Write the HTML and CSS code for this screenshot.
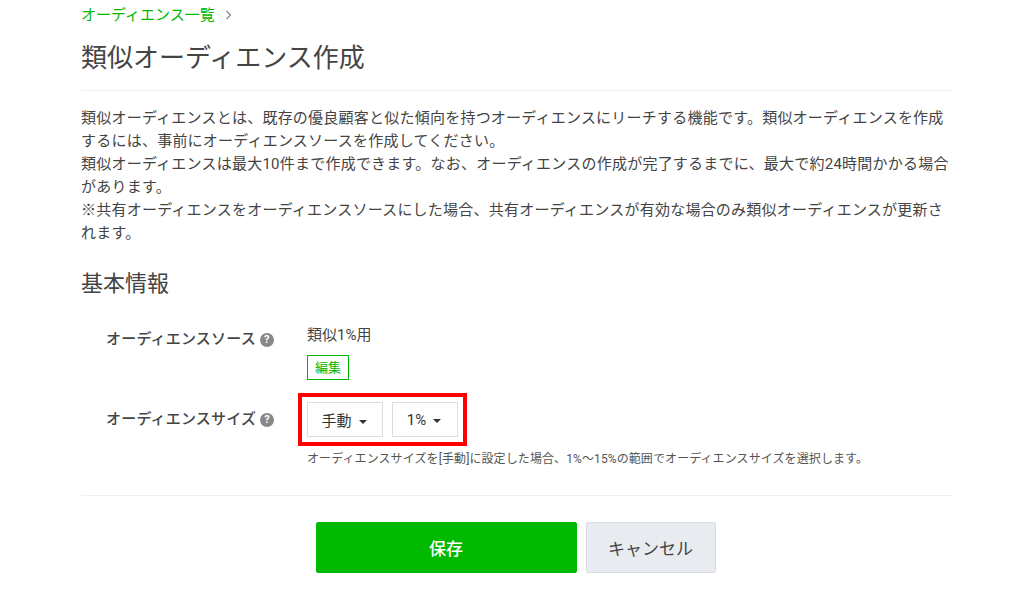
FILE: index.html
```html
<!DOCTYPE html>
<html lang="ja">
<head>
    <meta charset="UTF-8">
    <title>類似オーディエンス作成</title>
    <link rel="stylesheet" href="styles.css">
</head>
<body>
    <div class="container">
        <div class="breadcrumb">
            <a href="#">オーディエンス一覧</a>
            <svg class="crumb-arrow" width="8" height="10" viewBox="0 0 8 10"><path d="M1.5 1l4 4-4 4" fill="none" stroke="#888" stroke-width="1.2"/></svg>
        </div>
        <h1>類似オーディエンス作成</h1>

        <p class="intro">類似オーディエンスとは、既存の優良顧客と似た傾向を持つオーディエンスにリーチする機能です。類似オーディエンスを作成するには、事前にオーディエンスソースを作成してください。<br>類似オーディエンスは最大10件まで作成できます。なお、オーディエンスの作成が完了するまでに、最大で約24時間かかる場合があります。<br>※共有オーディエンスをオーディエンスソースにした場合、共有オーディエンスが有効な場合のみ類似オーディエンスが更新されます。</p>

        <h2>基本情報</h2>

        <div class="form-row source-row">
            <div class="form-label">オーディエンスソース <span class="help">?</span></div>
            <div class="form-value">
                <div class="source-name">類似1%用</div>
                <a href="#" class="edit-btn">編集</a>
            </div>
        </div>

        <div class="form-row size-row">
            <div class="form-label">オーディエンスサイズ <span class="help">?</span></div>
            <div class="form-value">
                <div class="select-group">
                    <button class="select-btn manual">手動<span class="caret"></span></button>
                    <button class="select-btn percent">1%<span class="caret"></span></button>
                </div>
                <div class="note">オーディエンスサイズを[手動]に設定した場合、1%～15%の範囲でオーディエンスサイズを選択します。</div>
            </div>
        </div>

        <div class="actions">
            <button class="save">保存</button>
            <button class="cancel">キャンセル</button>
        </div>
    </div>
</body>
</html>
```

FILE: styles.css
```css
body {
    margin: 0;
    background: #fff;
    color: #444;
    font-family: Roboto, "Noto Sans CJK JP", sans-serif;
    font-size: 15px;
}
.container {
    width: 871px;
    margin-left: 81px;
}
.breadcrumb {
    height: 30px;
    line-height: 30px;
    font-size: 15px;
}
.breadcrumb a {
    color: #00b900;
    text-decoration: none;
}
.crumb-arrow {
    margin-left: 7px;
}
h1 {
    margin: 0;
    padding: 10px 0 14px;
    font-size: 26px;
    font-weight: 400;
    line-height: 36px;
    color: #444;
    border-bottom: 1px solid #f0f0f0;
}
.intro {
    margin: 16px 0 0;
    line-height: 23px;
    letter-spacing: 0.23px;
}
h2 {
    margin: 24px 0 0;
    font-size: 22px;
    font-weight: 400;
    line-height: 30px;
}
.form-row {
    display: flex;
}
.source-row {
    margin-top: 26px;
}
.size-row {
    margin-top: 13px;
}
.form-label {
    width: 226px;
    padding-left: 25px;
    box-sizing: border-box;
    font-weight: 500;
    line-height: 20px;
    padding-top: 4px;
    letter-spacing: 0.2px;
    flex-shrink: 0;
}
.size-row .form-label {
    padding-top: 16px;
}
.help {
    display: inline-block;
    width: 14px;
    height: 14px;
    border-radius: 50%;
    background: #888;
    color: #fff;
    font-size: 11px;
    font-weight: 700;
    line-height: 14px;
    text-align: center;
    vertical-align: 1px;
}
.source-name {
    line-height: 20px;
}
.edit-btn {
    display: inline-block;
    margin-top: 10px;
    padding: 0 7px;
    height: 23px;
    line-height: 23px;
    border: 1px solid #00b900;
    color: #00b900;
    font-size: 13px;
    text-decoration: none;
}
.select-group {
    display: inline-flex;
    gap: 9px;
    padding: 5px;
    margin-left: -9px;
    border: 4px solid #f00;
}
.select-btn {
    height: 35px;
    padding: 0 2px 0 0;
    background: #fff;
    border: 1px solid #ddd;
    color: #333;
    font-family: inherit;
    font-size: 15px;
}
.manual {
    width: 76px;
}
.percent {
    width: 66px;
}
.caret {
    display: inline-block;
    margin-left: 7px;
    vertical-align: 2px;
    border-top: 4px solid #333;
    border-left: 4px solid transparent;
    border-right: 4px solid transparent;
}
.note {
    margin-top: 4px;
    font-size: 12px;
    line-height: 18px;
    letter-spacing: 0.1px;
    color: #555;
}
.actions {
    display: flex;
    justify-content: center;
    gap: 9px;
    margin-top: 27px;
    padding: 26px 2px 0 0;
    border-top: 1px solid #f0f0f0;
}
.actions button {
    height: 51px;
    border-radius: 2px;
    font-family: inherit;
    font-size: 17px;
}
.save {
    width: 261px;
    background: #00b900;
    border: 1px solid #00b900;
    color: #fff;
    font-weight: 500;
}
.cancel {
    width: 130px;
    background: #e8ebef;
    border: 1px solid #d8dce1;
    color: #444;
}
```
